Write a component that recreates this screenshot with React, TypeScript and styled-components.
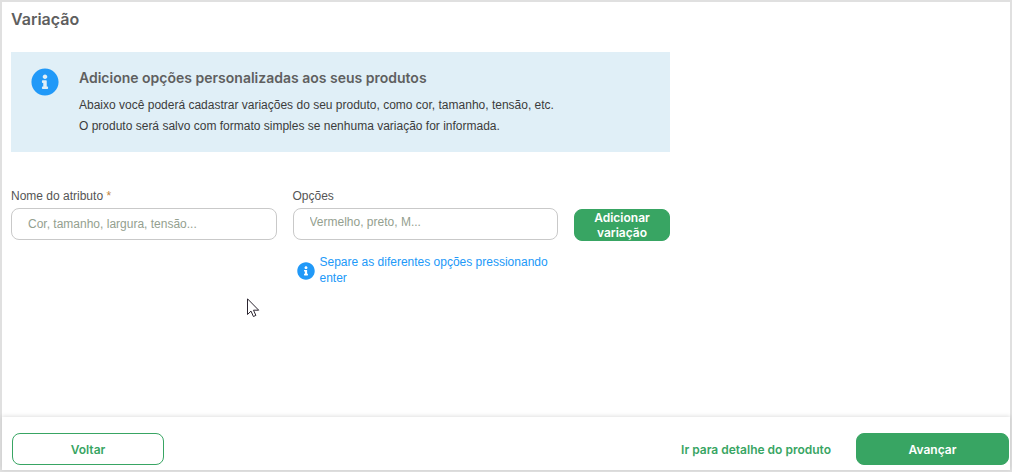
import React from "react";
import styled, { createGlobalStyle } from "styled-components";
import { FaInfoCircle } from "react-icons/fa";

const green = "#38a563";
const blue = "#2199f8";
const headingFont = `Inter, "Open Sans", sans-serif`;

const GlobalStyle = createGlobalStyle`
  * { box-sizing: border-box; }
  body {
    margin: 0;
    background: #fff;
    color: #3c3c3c;
    font: 12px/16px "Liberation Sans", Arial, sans-serif;
  }
`;

const Page = styled.div`
  display: flex;
  flex-direction: column;
  min-height: 100vh;
  border: 2px solid #e0e0e0;
`;

const Main = styled.main`
  flex: 1;
  padding: 8px 9px;
`;

const PageTitle = styled.h1`
  margin: 0 0 24px;
  font: 600 16px/18px ${headingFont};
  color: #5f5f5f;
`;

const Column = styled.div`
  width: 100%;
  max-width: 659px;
`;

const Notice = styled.section`
  display: flex;
  gap: 20px;
  padding: 16px 20px 15px;
  background: #e0eff7;
`;

const NoticeIcon = styled(FaInfoCircle)`
  flex: none;
  width: 28px;
  height: 28px;
  color: ${blue};
`;

const NoticeTitle = styled.h2`
  margin: 0 0 7px;
  font: 600 14px/20px ${headingFont};
  color: #5f5f5f;
`;

const NoticeText = styled.p`
  margin: 0;
  line-height: 21px;
`;

const Form = styled.form`
  display: flex;
  align-items: flex-start;
  gap: 16px;
  margin-top: 36px;
`;

const Field = styled.div`
  flex: 1;
  min-width: 0;
`;

const Label = styled.label`
  display: block;
  margin-bottom: 4px;
  color: #555;
`;

const Required = styled.span`
  color: #bf8340;
`;

const Input = styled.input<{ $raised?: boolean }>`
  display: block;
  width: 100%;
  height: 32px;
  padding: ${(p) => (p.$raised ? "0 16px 4px" : "0 16px")};
  border: 1px solid #c9c9c9;
  border-radius: 8px;
  background: #fff;
  font: inherit;
  color: #3c3c3c;

  &::placeholder {
    color: #94a08f;
    opacity: 1;
  }
`;

const Hint = styled.p`
  display: flex;
  align-items: center;
  gap: 5px;
  margin: 14px 4px 0;
  color: ${blue};
`;

const HintIcon = styled(FaInfoCircle)`
  flex: none;
  width: 18px;
  height: 18px;
  margin-top: 2px;
`;

const Button = styled.button<{ $outlined?: boolean; $width: number }>`
  flex: none;
  width: ${(p) => p.$width}px;
  height: 32px;
  padding: 0 16px;
  border: 1px solid ${green};
  border-radius: 8px;
  background: ${(p) => (p.$outlined ? "#fff" : green)};
  color: ${(p) => (p.$outlined ? green : "#fff")};
  font: 600 12px/15px ${headingFont};
  cursor: pointer;
`;

const AddAction = styled.div`
  display: flex;
  padding-top: 21px;
`;

const Footer = styled.footer`
  display: flex;
  align-items: center;
  gap: 25px;
  padding: 16px 1px 5px 10px;
  background: #fff;
  box-shadow: 0 -1px 4px rgba(0, 0, 0, 0.12);
`;

const DetailLink = styled.a`
  margin-left: auto;
  color: ${green};
  font: 600 12px/15px ${headingFont};
  text-decoration: none;
`;

const Pointer = styled.svg`
  position: absolute;
  left: 247px;
  top: 298px;
  pointer-events: none;
`;

export default function App() {
  return (
    <Page>
      <GlobalStyle />
      <Main>
        <PageTitle>Variação</PageTitle>
        <Column>
          <Notice>
            <NoticeIcon aria-hidden />
            <div>
              <NoticeTitle>Adicione opções personalizadas aos seus produtos</NoticeTitle>
              <NoticeText>
                Abaixo você poderá cadastrar variações do seu produto, como cor, tamanho, tensão, etc.
              </NoticeText>
              <NoticeText>
                O produto será salvo com formato simples se nenhuma variação for informada.
              </NoticeText>
            </div>
          </Notice>
          <Form onSubmit={(e) => e.preventDefault()}>
            <Field>
              <Label htmlFor="attribute">
                Nome do atributo <Required>*</Required>
              </Label>
              <Input id="attribute" placeholder="Cor, tamanho, largura, tensão..." />
            </Field>
            <Field>
              <Label htmlFor="options">Opções</Label>
              <Input id="options" $raised placeholder="Vermelho, preto, M..." />
              <Hint>
                <HintIcon aria-hidden />
                <span>Separe as diferentes opções pressionando enter</span>
              </Hint>
            </Field>
            <AddAction>
              <Button type="submit" $width={96}>Adicionar variação</Button>
            </AddAction>
          </Form>
        </Column>
      </Main>
      <Footer>
        <Button type="button" $outlined $width={152}>Voltar</Button>
        <DetailLink href="#detalhe">Ir para detalhe do produto</DetailLink>
        <Button type="button" $width={153}>Avançar</Button>
      </Footer>
      <Pointer width="13" height="20" viewBox="0 0 13 20" aria-hidden>
        <path
          d="M.5.8v15.7l3.5-3.4 2.4 5.4 2.5-1.1-2.4-5.2h5.2z"
          fill="#fff"
          stroke="#2b2530"
        />
      </Pointer>
    </Page>
  );
}
